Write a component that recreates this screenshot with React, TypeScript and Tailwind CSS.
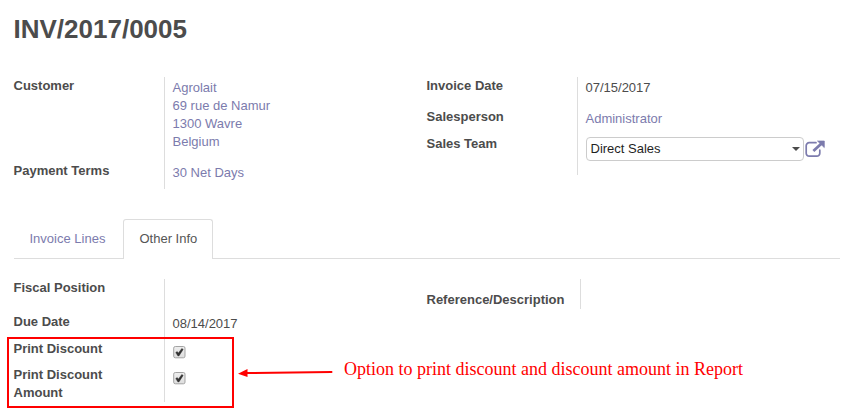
import type { ReactNode } from "react";

function Row({ label, height, children }: { label: string; height: string; children?: ReactNode }) {
  return (
    <div className={`flex ${height}`}>
      <div className="w-[150px] shrink-0 pr-9 font-bold">{label}</div>
      <div className="grow border-l border-[#dddddd] pl-2 pt-0.5">{children}</div>
    </div>
  );
}

function Check({ label }: { label: string }) {
  return (
    <svg role="img" aria-label={label} className="mt-1 block" width="13" height="13" viewBox="0 0 13 13">
      <defs>
        <linearGradient id="boxFill" x1="0" y1="0" x2="0" y2="1">
          <stop offset="0" stopColor="#eeeeee" />
          <stop offset="1" stopColor="#dedede" />
        </linearGradient>
      </defs>
      <rect x="0.7" y="0.5" width="11.3" height="11.3" rx="1.6" fill="url(#boxFill)" stroke="#a3a3a3" />
      <path d="M2.7 6.6 4.2 5.5 5.4 7.1 8.8 2.4 10.2 3.4 6 9.9H4.9Z" fill="#333333" stroke="#333333" strokeWidth="0.4" />
    </svg>
  );
}

function ExternalLink() {
  return (
    <svg className="ml-px block shrink-0" width="21" height="18" viewBox="0 0 21 18" fill="none">
      <path d="M11 2.7H4.2A3 3 0 0 0 1.2 5.7V13.2A3 3 0 0 0 4.2 16.2H11.8A3 3 0 0 0 14.8 13.2V10.2" stroke="#7c7bad" strokeWidth="1.7" strokeLinecap="round" />
      <path d="M8.4 11 16.5 3.4" stroke="#7c7bad" strokeWidth="2.8" />
      <path d="M12.5 1H19.3V7.6Z" fill="#7c7bad" stroke="#7c7bad" strokeWidth="0.7" />
    </svg>
  );
}

export default function App() {
  return (
    <div className="relative h-[418px] w-[855px] overflow-hidden bg-white pl-[13.5px] pr-[15px] pt-[11px] font-['Liberation_Sans',Arial,sans-serif] text-[13px] leading-[18px] text-[#4c4c4c]">
      <h1 className="h-[66px] text-[26px] font-bold leading-[36px]">INV/2017/0005</h1>

      <div className="flex h-[142px] items-start">
        <div className="w-[413px]">
          <Row label="Customer" height="h-[85px]">
            <div className="text-[#7c7bad]">
              <div>Agrolait</div>
              <div>69 rue de Namur</div>
              <div>1300 Wavre</div>
              <div>Belgium</div>
            </div>
          </Row>
          <Row label="Payment Terms" height="h-[27px]">
            <span className="text-[#7c7bad]">30 Net Days</span>
          </Row>
        </div>
        <div className="grow">
          <Row label="Invoice Date" height="h-[31px]">07/15/2017</Row>
          <Row label="Salesperson" height="h-[27px]">
            <span className="text-[#7c7bad]">Administrator</span>
          </Row>
          <Row label="Sales Team" height="h-[40px]">
            <div className="flex items-center">
              <div className="flex h-6 w-[218px] items-center justify-between rounded-[4px] border border-[#cccccc] pl-1 pr-[3px] text-[#1f1f1f]">
                <span>Direct Sales</span>
                <span className="border-x-4 border-t-4 border-x-transparent border-t-[#4c4c4c]" />
              </div>
              <ExternalLink />
            </div>
          </Row>
        </div>
      </div>

      <div className="flex h-10">
        <div className="w-[109.5px] border-b border-[#dddddd] pl-4 pt-[11px] text-[#7c7bad]">Invoice Lines</div>
        <div className="w-[90px] rounded-t-[3px] border border-b-0 border-[#dddddd] pl-[15.5px] pt-2.5 text-[#555555]">Other Info</div>
        <div className="grow border-b border-[#dddddd]" />
      </div>

      <div className="flex items-start pt-5">
        <div className="w-[413px]">
          <Row label="Fiscal Position" height="h-[34px]" />
          <Row label="Due Date" height="h-[27px]">08/14/2017</Row>
          <Row label="Print Discount" height="h-[26px]"><Check label="Print Discount" /></Row>
          <Row label="Print Discount Amount" height="h-[36px]"><Check label="Print Discount Amount" /></Row>
        </div>
        <div className="flex h-[30px] items-stretch">
          <div className="w-[153px] pt-3 font-bold">Reference/Description</div>
          <div className="border-l border-[#dddddd]" />
        </div>
      </div>

      <div className="absolute left-[7px] top-[337px] h-[71px] w-[227px] border-2 border-[#ff0000]" />
      <svg className="absolute left-[236px] top-[364px]" width="98" height="18" viewBox="0 0 98 18">
        <path d="M10 9 95.5 8" stroke="#ff0000" strokeWidth="2" strokeLinecap="round" />
        <path d="M2 9.8 11.5 5V13Z" fill="#ff0000" />
      </svg>
      <div className="absolute left-[344px] top-[359px] whitespace-nowrap font-['Liberation_Serif','Times_New_Roman',serif] text-[18px] leading-5 text-[#ff0000]">
        Option to print discount and discount amount in Report
      </div>
    </div>
  );
}
